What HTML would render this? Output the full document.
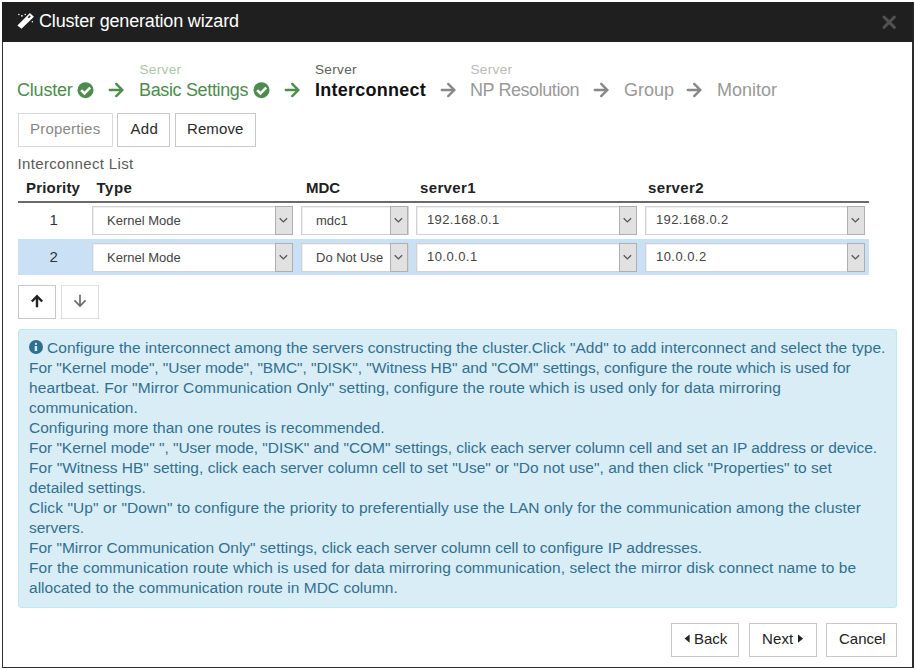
<!DOCTYPE html>
<html><head><meta charset="utf-8">
<style>
html,body{margin:0;padding:0;width:916px;height:670px;overflow:hidden;background:#fff;}
body{position:relative;font-family:"Liberation Sans",sans-serif;}
.a{position:absolute;white-space:nowrap;line-height:1;}
#frame{position:absolute;left:2px;top:2px;width:909px;height:665px;border-left:1px solid #303030;border-right:2px solid #2c2c2c;border-bottom:1px solid #2c2c2c;box-sizing:content-box;}
#hdr{position:absolute;left:2px;top:2px;width:911px;height:40px;background:#1f1f1f;}
.btn{position:absolute;box-sizing:border-box;border:1px solid #c8c8c8;background:#fff;}
.sel{position:absolute;box-sizing:border-box;border:1px solid #d2d2d2;background:#fff;box-shadow:inset 1px 1px 1px rgba(0,0,0,.07);}
.dd{position:absolute;box-sizing:border-box;border:1px solid #afafaf;background:#e1e1e1;}
.green{color:#4d8c4d;}
</style></head><body>
<div id="frame"></div>
<div id="hdr"></div>
<!-- wand icon -->
<svg class="a" style="left:14px;top:10px" width="24" height="22" viewBox="14 10 24 22">
  <g fill="#fff">
    <path d="M17.4 25.4 L29.9 13 L33.9 16.8 L21.5 28.8 Z"/>
    <circle cx="18.9" cy="14.4" r="0.75"/><circle cx="21.9" cy="15.8" r="0.9"/><circle cx="25.2" cy="14.4" r="0.75"/><circle cx="32.4" cy="21.7" r="0.75"/>
  </g>
  <path d="M30.79 16.3 L29.8 15.3 L27.8 17.3 L28.8 18.3 Z" fill="#1f1f1f"/>
</svg>
<div class="a" style="left:39px;top:12px;font-size:18px;letter-spacing:-0.17px;color:#fff;">Cluster generation wizard</div>
<!-- close x -->
<svg class="a" style="left:880.5px;top:14px" width="16" height="16" viewBox="0 0 16 16"><path d="M3 3 L13.4 13.4 M13.4 3 L3 13.4" stroke="#515151" stroke-width="3" stroke-linecap="round"/></svg>

<!-- steps -->
<div class="a green" style="left:17px;top:81px;font-size:18px;letter-spacing:-0.2px;">Cluster</div>
<svg class="a" style="left:77px;top:82px" width="17" height="17" viewBox="0 0 17 17"><circle cx="8.5" cy="8.2" r="8" fill="#4d8c4d"/><path d="M4.1 8.1 L7.4 11.4 L13.2 5.6" stroke="#fff" stroke-width="2.6" fill="none"/></svg>
<svg class="a" style="left:108px;top:82px" width="18" height="16" viewBox="0 0 18 16"><path stroke-linecap="round" d="M1.8 8 H14 M8.2 1.9 L14.3 8 L8.2 14.1" stroke="#4d8c4d" stroke-width="2.4" fill="none"/></svg>

<div class="a" style="left:139.5px;top:62.6px;font-size:13.6px;letter-spacing:0.3px;color:#a9c9a9;">Server</div>
<div class="a green" style="left:139px;top:81px;font-size:18px;letter-spacing:-0.35px;">Basic Settings</div>
<svg class="a" style="left:253px;top:82px" width="17" height="17" viewBox="0 0 17 17"><circle cx="8.5" cy="8.2" r="8" fill="#4d8c4d"/><path d="M4.1 8.1 L7.4 11.4 L13.2 5.6" stroke="#fff" stroke-width="2.6" fill="none"/></svg>
<svg class="a" style="left:284px;top:82px" width="18" height="16" viewBox="0 0 18 16"><path stroke-linecap="round" d="M1.8 8 H14 M8.2 1.9 L14.3 8 L8.2 14.1" stroke="#4d8c4d" stroke-width="2.4" fill="none"/></svg>

<div class="a" style="left:315px;top:62.6px;font-size:13.6px;letter-spacing:0.3px;color:#606060;">Server</div>
<div class="a" style="left:315px;top:81px;font-size:18px;font-weight:bold;letter-spacing:0.24px;color:#111;">Interconnect</div>
<svg class="a" style="left:440px;top:82px" width="18" height="16" viewBox="0 0 18 16"><path stroke-linecap="round" d="M1.8 8 H14 M8.2 1.9 L14.3 8 L8.2 14.1" stroke="#888" stroke-width="2.4" fill="none"/></svg>

<div class="a" style="left:470.5px;top:62.6px;font-size:13.6px;letter-spacing:0.3px;color:#bbb;">Server</div>
<div class="a" style="left:470px;top:81px;font-size:18px;letter-spacing:-0.43px;color:#999;">NP Resolution</div>
<svg class="a" style="left:593px;top:82px" width="18" height="16" viewBox="0 0 18 16"><path stroke-linecap="round" d="M1.8 8 H14 M8.2 1.9 L14.3 8 L8.2 14.1" stroke="#888" stroke-width="2.4" fill="none"/></svg>
<div class="a" style="left:624px;top:81px;font-size:18px;color:#999;">Group</div>
<svg class="a" style="left:686px;top:82px" width="18" height="16" viewBox="0 0 18 16"><path stroke-linecap="round" d="M1.8 8 H14 M8.2 1.9 L14.3 8 L8.2 14.1" stroke="#888" stroke-width="2.4" fill="none"/></svg>
<div class="a" style="left:717px;top:81px;font-size:18px;color:#999;">Monitor</div>

<!-- toolbar -->
<div class="btn" style="left:18px;top:113px;width:95px;height:34px;border-color:#dadada;"></div>
<div class="a" style="left:30px;top:121px;font-size:15px;letter-spacing:0.2px;color:#888;">Properties</div>
<div class="btn" style="left:117px;top:113px;width:53px;height:34px;"></div>
<div class="a" style="left:130.5px;top:121px;font-size:15px;letter-spacing:0.3px;color:#2a2a2a;">Add</div>
<div class="btn" style="left:175px;top:113px;width:81px;height:34px;"></div>
<div class="a" style="left:187px;top:121px;font-size:15px;letter-spacing:0.1px;color:#2a2a2a;">Remove</div>

<div class="a" style="left:17.5px;top:156px;font-size:15px;letter-spacing:0.35px;color:#5a5a5a;">Interconnect List</div>


<!-- table header -->
<div class="a" style="left:26px;top:180px;font-size:15px;font-weight:bold;letter-spacing:0.2px;color:#222;">Priority</div>
<div class="a" style="left:96.5px;top:180px;font-size:15px;font-weight:bold;letter-spacing:0.5px;color:#222;">Type</div>
<div class="a" style="left:306px;top:180px;font-size:15px;font-weight:bold;color:#222;">MDC</div>
<div class="a" style="left:420px;top:180px;font-size:15px;font-weight:bold;letter-spacing:0.35px;color:#222;">server1</div>
<div class="a" style="left:648px;top:180px;font-size:15px;font-weight:bold;letter-spacing:0.35px;color:#222;">server2</div>
<div class="a" style="left:18px;top:201px;width:851px;height:2px;background:#6a6a6a;"></div>
<!-- row 2 highlight -->
<div class="a" style="left:18px;top:239px;width:851px;height:36px;background:#cae1f5;"></div>
<!-- row 1 -->
<div class="a" style="left:49.5px;top:211.5px;font-size:15px;color:#333;">1</div>
<div class="sel" style="left:92px;top:206px;width:201px;height:29px;"></div><div class="dd" style="left:275px;top:206px;width:18px;height:29px;"></div>
<div class="a" style="left:107px;top:214px;font-size:13px;color:#444;">Kernel Mode</div>
<div class="sel" style="left:301px;top:206px;width:108px;height:29px;"></div><div class="dd" style="left:390px;top:206px;width:18px;height:29px;"></div>
<div class="a" style="left:316px;top:214px;font-size:13px;color:#444;">mdc1</div>
<div class="sel" style="left:416px;top:206px;width:221px;height:29px;"></div><div class="dd" style="left:619px;top:206px;width:18px;height:29px;"></div>
<div class="a" style="left:427px;top:212.5px;font-size:13px;letter-spacing:0.35px;color:#444;">192.168.0.1</div>
<div class="sel" style="left:645px;top:206px;width:220px;height:29px;"></div><div class="dd" style="left:847px;top:206px;width:18px;height:29px;"></div>
<div class="a" style="left:656px;top:212.5px;font-size:13px;letter-spacing:0.35px;color:#444;">192.168.0.2</div>
<!-- row 2 -->
<div class="a" style="left:49.5px;top:248.5px;font-size:15px;color:#333;">2</div>
<div class="sel" style="left:92px;top:243px;width:201px;height:29px;"></div><div class="dd" style="left:275px;top:243px;width:18px;height:29px;"></div>
<div class="a" style="left:107px;top:251px;font-size:13px;color:#444;">Kernel Mode</div>
<div class="sel" style="left:301px;top:243px;width:108px;height:29px;"></div><div class="dd" style="left:390px;top:243px;width:18px;height:29px;"></div>
<div class="a" style="left:316px;top:251px;font-size:13px;color:#444;">Do Not Use</div>
<div class="sel" style="left:416px;top:243px;width:221px;height:29px;"></div><div class="dd" style="left:619px;top:243px;width:18px;height:29px;"></div>
<div class="a" style="left:427px;top:249.5px;font-size:13px;letter-spacing:0.45px;color:#444;">10.0.0.1</div>
<div class="sel" style="left:645px;top:243px;width:220px;height:29px;"></div><div class="dd" style="left:847px;top:243px;width:18px;height:29px;"></div>
<div class="a" style="left:656px;top:249.5px;font-size:13px;letter-spacing:0.45px;color:#444;">10.0.0.2</div>

<svg class="a" style="left:279px;top:217.0px" width="10" height="7" viewBox="0 0 10 7"><path d="M0.7 1.2 L4.4 4.9 L8.1 1.2" stroke="#585858" stroke-width="1.35" fill="none"/></svg>
<svg class="a" style="left:279px;top:254.0px" width="10" height="7" viewBox="0 0 10 7"><path d="M0.7 1.2 L4.4 4.9 L8.1 1.2" stroke="#585858" stroke-width="1.35" fill="none"/></svg>
<svg class="a" style="left:394px;top:217.0px" width="10" height="7" viewBox="0 0 10 7"><path d="M0.7 1.2 L4.4 4.9 L8.1 1.2" stroke="#585858" stroke-width="1.35" fill="none"/></svg>
<svg class="a" style="left:394px;top:254.0px" width="10" height="7" viewBox="0 0 10 7"><path d="M0.7 1.2 L4.4 4.9 L8.1 1.2" stroke="#585858" stroke-width="1.35" fill="none"/></svg>
<svg class="a" style="left:623px;top:217.0px" width="10" height="7" viewBox="0 0 10 7"><path d="M0.7 1.2 L4.4 4.9 L8.1 1.2" stroke="#585858" stroke-width="1.35" fill="none"/></svg>
<svg class="a" style="left:623px;top:254.0px" width="10" height="7" viewBox="0 0 10 7"><path d="M0.7 1.2 L4.4 4.9 L8.1 1.2" stroke="#585858" stroke-width="1.35" fill="none"/></svg>
<svg class="a" style="left:851px;top:217.0px" width="10" height="7" viewBox="0 0 10 7"><path d="M0.7 1.2 L4.4 4.9 L8.1 1.2" stroke="#585858" stroke-width="1.35" fill="none"/></svg>
<svg class="a" style="left:851px;top:254.0px" width="10" height="7" viewBox="0 0 10 7"><path d="M0.7 1.2 L4.4 4.9 L8.1 1.2" stroke="#585858" stroke-width="1.35" fill="none"/></svg>
<!-- up/down -->
<div class="btn" style="left:18px;top:285px;width:38px;height:34px;"></div>
<svg class="a" style="left:30px;top:294px" width="14" height="14" viewBox="0 0 14 14"><path d="M7 13.2 V2.5 M1.8 7.5 L7 2.2 L12.2 7.5" stroke="#222" stroke-width="2.4" fill="none"/></svg>
<div class="btn" style="left:61px;top:285px;width:38px;height:34px;border-color:#dedede;"></div>
<svg class="a" style="left:73px;top:294px" width="14" height="14" viewBox="0 0 14 14"><path d="M7 0.8 V11.8 M1.4 6.4 L7 12 L12.6 6.4" stroke="#6a6a6a" stroke-width="1.7" fill="none"/></svg>

<!-- info box -->
<div class="a" style="left:18px;top:329px;width:879px;height:279px;box-sizing:border-box;background:#d9edf7;border:1px solid #bce8f1;border-radius:3px;"></div>
<svg class="a" style="left:29px;top:340px" width="14" height="14" viewBox="0 0 14 14"><circle cx="7" cy="7" r="7" fill="#2f6e8e"/><circle cx="6.9" cy="3.9" r="1.1" fill="#d9edf7"/><path d="M5.7 6 H8.1 V10.2 L8.4 10.9 H5.4 L5.7 10.2 Z" fill="#d9edf7"/></svg>
<div class="a" id="info" style="left:29px;top:338px;font-size:15.5px;line-height:20px;color:#31708f;">
<div style="padding-left:18px;letter-spacing:0.045px">Configure the interconnect among the servers constructing the cluster.Click "Add" to add interconnect and select the type.</div>
<div style="letter-spacing:-0.065px">For "Kernel mode", "User mode", "BMC", "DISK", "Witness HB" and "COM" settings, configure the route which is used for</div>
<div style="letter-spacing:0.095px">heartbeat. For "Mirror Communication Only" setting, configure the route which is used only for data mirroring</div>
<div style="letter-spacing:0.015px">communication.</div>
<div style="letter-spacing:0.030px">Configuring more than one routes is recommended.</div>
<div style="letter-spacing:-0.045px">For "Kernel mode" ", "User mode, "DISK" and "COM" settings, click each server column cell and set an IP address or device.</div>
<div style="letter-spacing:0.020px">For "Witness HB" setting, click each server column cell to set "Use" or "Do not use", and then click "Properties" to set</div>
<div style="letter-spacing:0.029px">detailed settings.</div>
<div style="letter-spacing:0.093px">Click "Up" or "Down" to configure the priority to preferentially use the LAN only for the communication among the cluster</div>
<div style="letter-spacing:-0.014px">servers.</div>
<div style="letter-spacing:-0.020px">For "Mirror Communication Only" settings, click each server column cell to configure IP addresses.</div>
<div style="letter-spacing:0.083px">For the communication route which is used for data mirroring communication, select the mirror disk connect name to be</div>
<div style="letter-spacing:0.018px">allocated to the communication route in MDC column.</div>
</div>

<!-- footer -->
<div class="btn" style="left:671px;top:623px;width:68px;height:34px;"></div>
<svg class="a" style="left:684px;top:634px" width="6" height="10" viewBox="0 0 6 10"><path d="M5.6 0.4 V8.8 L0.6 4.6 Z" fill="#222"/></svg>
<div class="a" style="left:694px;top:631px;font-size:15px;color:#222;">Back</div>
<div class="btn" style="left:749px;top:623px;width:68px;height:34px;"></div>
<div class="a" style="left:762px;top:631px;font-size:15px;letter-spacing:0.15px;color:#222;">Next</div>
<svg class="a" style="left:798px;top:634px" width="6" height="10" viewBox="0 0 6 10"><path d="M0 0.4 V8.8 L5.1 4.6 Z" fill="#222"/></svg>
<div class="btn" style="left:826px;top:623px;width:71px;height:34px;"></div>
<div class="a" style="left:839px;top:631px;font-size:15px;color:#222;">Cancel</div>
</body></html>
